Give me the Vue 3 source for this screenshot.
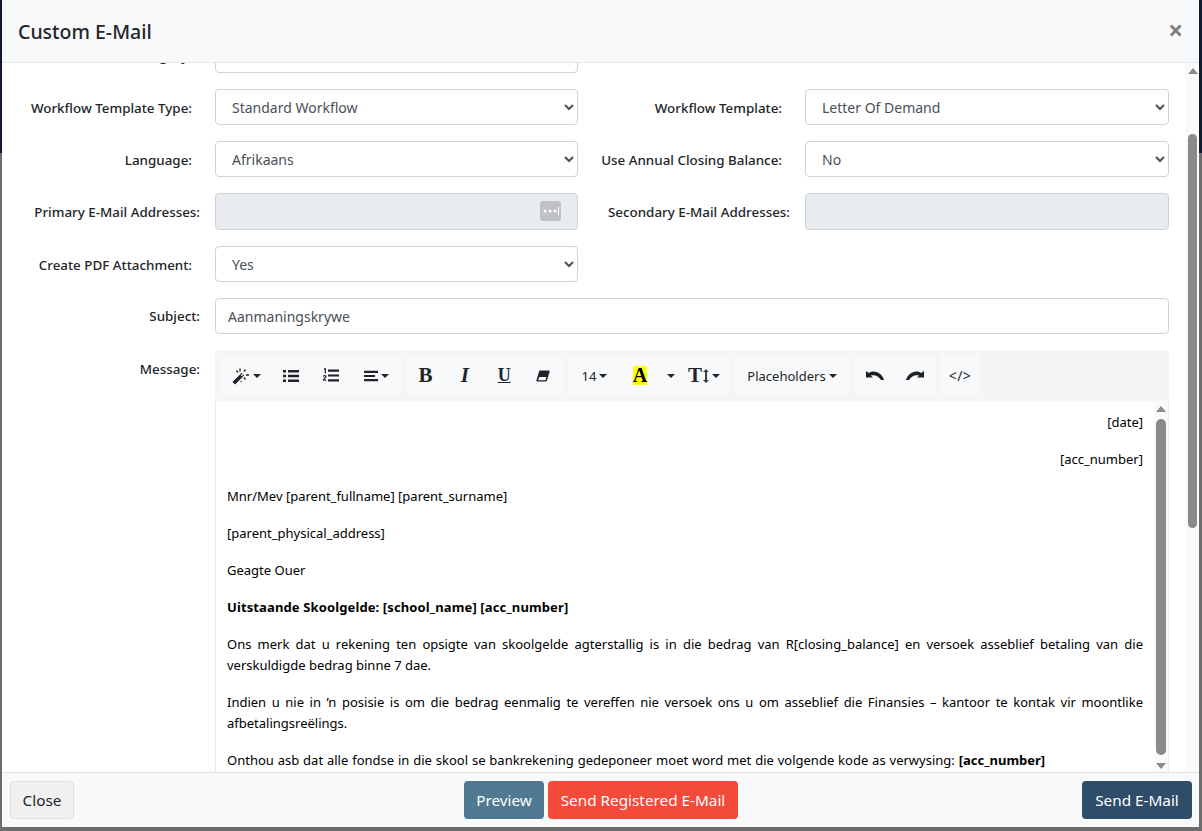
<script setup>
const topRows = [
  { l1: 'Workflow Template Type:', v1: 'Standard Workflow', l2: 'Workflow Template:', v2: 'Letter Of Demand' },
  { l1: 'Language:', v1: 'Afrikaans', l2: 'Use Annual Closing Balance:', v2: 'No' },
];
</script>

<template>
  <div class="page">
    <div class="modal">
      <header class="modal-header">
        <h5>Custom E-Mail</h5>
        <span class="close">×</span>
      </header>

      <div class="modal-body">
        <div class="scroll-content">
          <div class="row clipped">
            <label class="inset">Category:</label>
            <div class="field"></div>
          </div>

          <div v-for="row in topRows" :key="row.l1" class="row">
            <label class="inset">{{ row.l1 }}</label>
            <select class="field select"><option>{{ row.v1 }}</option></select>
            <label class="inset">{{ row.l2 }}</label>
            <select class="field select"><option>{{ row.v2 }}</option></select>
          </div>

          <div class="row">
            <label>Primary E-Mail Addresses:</label>
            <div class="field disabled tall">
              <span class="dots">
                <svg width="21" height="20" viewBox="0 0 21 20">
                  <rect width="21" height="20" rx="3" fill="#bfc1c5" />
                  <circle cx="5" cy="10" r="1.500" fill="#fff" />
                  <circle cx="10" cy="10" r="1.500" fill="#fff" />
                  <circle cx="15" cy="10" r="1.500" fill="#fff" />
                  <rect x="18" y="6" width="1" height="8" fill="#fff" />
                </svg>
              </span>
            </div>
            <label>Secondary E-Mail Addresses:</label>
            <div class="field disabled tall"></div>
          </div>

          <div class="row">
            <label class="inset">Create PDF Attachment:</label>
            <select class="field select"><option>Yes</option></select>
          </div>

          <div class="row wide">
            <label>Subject:</label>
            <input class="field text" value="Aanmaningskrywe" />
          </div>

          <div class="row wide">
            <label class="top">Message:</label>
            <div class="editor">
              <div class="toolbar">
                <div class="group">
                  <button class="tool caret w50">
                    <svg width="18" height="18" viewBox="0 0 18 18">
                      <path d="M1.800 16.200 11 7" stroke="#1f2226" stroke-width="3.600" />
                      <path d="M9.300 8.700 11 7" stroke="#f8f9fa" stroke-width="1.400" />
                      <path d="M8 1.500v3M13.500 2.500l-1.500 2M17 8h-3M4.500 3.500l1.500 2M13.500 12.500l-1.500-2M9 14v1" stroke="#1f2226" stroke-width="1.300" />
                    </svg>
                  </button>
                  <button class="tool w40">
                    <svg width="16" height="14" viewBox="0 0 16 14">
                      <path d="M0 1h3v2.400H0zM5 1h11v2.400H5zM0 5.800h3v2.400H0zM5 5.800h11v2.400H5zM0 10.600h3V13H0zM5 10.600h11V13H5z" fill="#1f2226" />
                    </svg>
                  </button>
                  <button class="tool w40">
                    <svg width="16" height="15" viewBox="0 0 16 15">
                      <path d="M5 1.500h11v2.200H5zM5 6.400h11v2.200H5zM5 11.300h11v2.200H5z" fill="#1f2226" />
                      <path d="M1 1.300 2.300.6v5M.3 8.500c.5-1.200 2.700-1 2.600.3 0 1-2.400 1.900-2.400 3.400h2.700" fill="none" stroke="#1f2226" stroke-width="1.200" />
                    </svg>
                  </button>
                  <button class="tool caret w50">
                    <svg width="14" height="12" viewBox="0 0 14 12">
                      <path d="M0 .8h14v2.200H0zM0 4.900h11v2.200H0zM0 9h14v2.200H0z" fill="#1f2226" />
                    </svg>
                  </button>
                </div>

                <div class="group">
                  <button class="tool glyph">B</button>
                  <button class="tool glyph italic">I</button>
                  <button class="tool glyph under">U</button>
                  <button class="tool">
                    <svg width="14" height="12" viewBox="0 0 14 12">
                      <path d="M4 .5h8.500c1 0 1.300.6 1 1.500l-2.400 8.300c-.3.800-.8 1.200-1.600 1.200H1.500c-1 0-1.300-.6-1-1.500L3 1.700C3.200 1 3.500.5 4 .5z" fill="#1f2226" />
                      <path d="M3.200 7h7.200l-.9 3.200H2.200z" fill="#f8f9fa" />
                    </svg>
                  </button>
                </div>

                <div class="group">
                  <button class="tool caret plain w53">14</button>
                  <button class="tool glyph w38"><span class="hilite">A</span></button>
                  <button class="tool caret w20"></button>
                  <button class="tool glyph caret size w50">T<svg width="6" height="14" viewBox="0 0 6 14"><path d="M3 0 6 3H4v8h2l-3 3-3-3h2V3H0z" fill="#3a3f45" /></svg></button>
                </div>

                <div class="group">
                  <button class="tool caret plain w116">Placeholders</button>
                </div>

                <div class="group">
                  <button class="tool w40">
                    <svg width="18" height="9" viewBox="0 0 18 9">
                      <path d="M0 0v6.500h7L4.800 4.600C8.500 3.500 12.500 4.700 15 9h3C16.500 2.500 8.500-2 3 2z" fill="#1f2226" />
                    </svg>
                  </button>
                  <button class="tool w40">
                    <svg width="18" height="9" viewBox="0 0 18 9">
                      <path d="M18 0v6.500h-7l2.200-1.900C9.500 3.500 5.500 4.700 3 9H0C1.500 2.500 9.500-2 15 2z" fill="#1f2226" />
                    </svg>
                  </button>
                </div>

                <div class="group">
                  <button class="tool plain code w40">&lt;/&gt;</button>
                </div>
              </div>

              <div class="doc">
                <div class="doc-text">
                  <p class="right">[date]</p>
                  <p class="right">[acc_number]</p>
                  <p>Mnr/Mev [parent_fullname] [parent_surname]</p>
                  <p>[parent_physical_address]</p>
                  <p>Geagte Ouer</p>
                  <p class="heading"><b>Uitstaande Skoolgelde: [school_name] [acc_number]</b></p>
                  <p>Ons merk dat u rekening ten opsigte van skoolgelde agterstallig is in die bedrag van R[closing_balance] en versoek asseblief betaling van die verskuldigde bedrag binne 7 dae.</p>
                  <p>Indien u nie in ’n posisie is om die bedrag eenmalig te vereffen nie versoek ons u om asseblief die Finansies – kantoor te kontak vir moontlike afbetalingsreëlings.</p>
                  <p class="spaced">Onthou asb dat alle fondse in die skool se bankrekening gedeponeer moet word met die volgende kode as verwysing: <b>[acc_number]</b></p>
                </div>
                <div class="bar small">
                  <i class="arrow up"></i>
                  <i class="thumb"></i>
                  <i class="arrow down"></i>
                </div>
              </div>
            </div>
          </div>
        </div>

        <div class="bar outer">
          <i class="arrow up"></i>
          <i class="thumb"></i>
        </div>
      </div>

      <footer class="modal-footer">
        <button class="btn btn-close">Close</button>
        <div class="center">
          <button class="btn btn-preview">Preview</button>
          <button class="btn btn-red">Send Registered E-Mail</button>
        </div>
        <button class="btn btn-send">Send E-Mail</button>
      </footer>
    </div>
  </div>
</template>

<style>
html,
body {
  margin: 0;
  height: 100%;
  overflow: hidden;
}
</style>

<style scoped>
.page {
  width: 1202px;
  height: 831px;
  box-sizing: border-box;
  padding: 0 3px 4px 2px;
  background: linear-gradient(#0f1a30 153px, #6d6d6d 153px);
  font-family: 'Noto Sans', sans-serif;
  font-size: 14px;
  color: #212529;
}

.modal {
  height: 100%;
  display: flex;
  flex-direction: column;
  background: #fff;
}

.modal-header {
  height: 61px;
  flex: none;
  display: flex;
  align-items: center;
  justify-content: space-between;
  padding: 1px 16px 0 16px;
  background: #f8f9fa;
  border-bottom: 1px solid #e6e9ec;
}

h5 {
  margin: 0;
  font-size: 19.500px;
  font-weight: 500;
  color: #212529;
}

.close {
  font-size: 26px;
  font-weight: 700;
  line-height: 1;
  color: #808080;
  margin-top: -3px;
}

.modal-body {
  flex: 1;
  min-height: 0;
  display: flex;
  overflow: hidden;
}

.scroll-content {
  flex: 1;
  min-width: 0;
  padding: 0 16px;
  margin-top: -26px;
  display: flex;
  flex-direction: column;
  gap: 16px;
}

.row {
  display: grid;
  grid-template-columns: 197px 363px 227px 364px;
  align-items: center;
  flex: none;
}

.row.wide {
  grid-template-columns: 197px 954px;
  align-items: start;
}

label {
  text-align: right;
  font-weight: 500;
  font-size: 13.400px;
  padding-top: 1px;
  padding-right: 15px;
  white-space: nowrap;
}

.row.wide label {
  padding-top: 0;
  height: 36px;
  line-height: 37px;
}

.row.wide .top {
  line-height: 38px;
}

label.inset {
  padding-right: 23px;
}

.field {
  box-sizing: border-box;
  height: 36px;
  width: 100%;
  border: 1px solid #ced4da;
  border-radius: 4px;
  background: #fff;
  font: inherit;
  color: #495057;
}

.select {
  padding: 0 8px 0 12px;
}

.text {
  padding: 0 12px;
  outline: none;
}

.disabled {
  background: #e9ecef;
}

.tall {
  height: 37px;
  position: relative;
}

.dots {
  position: absolute;
  right: 16px;
  top: 7px;
  display: flex;
}

.editor {
  border-radius: 4px 4px 0 0;
}

.toolbar {
  height: 51px;
  box-sizing: border-box;
  display: flex;
  gap: 5px;
  padding: 6px;
  background: #f5f5f5;
  border-radius: 4px 4px 0 0;
}

.group {
  display: flex;
  background: #f8f9fa;
  border-radius: 4px;
}

.tool {
  display: inline-flex;
  align-items: center;
  justify-content: center;
  flex: none;
  box-sizing: border-box;
  height: 39px;
  width: 39.250px;
  padding: 0;
  border: 0;
  background: none;
  font: inherit;
  color: #212529;
}

.w20 { width: 20px; }
.w38 { width: 38px; }
.w40 { width: 40px; }
.w50 { width: 50px; }
.w53 { width: 53px; }
.w116 { width: 116px; }

.caret::after {
  content: '';
  margin-left: 3px;
  border-top: 4px solid #212529;
  border-left: 4px solid transparent;
  border-right: 4px solid transparent;
}

.glyph {
  font-family: 'Liberation Serif', serif;
  font-size: 21px;
  font-weight: 700;
}

.italic {
  font-style: italic;
}

.under {
  text-decoration: underline;
  font-size: 18px;
}

.hilite {
  background: #ff0;
  color: #000;
  line-height: 19px;
  font-size: 20px;
}

.size svg {
  margin-left: 1px;
}

.plain {
  font-family: 'Noto Sans', sans-serif;
  font-size: 13px;
}

.code {
  font-size: 14px;
  letter-spacing: 0.500px;
}

.doc {
  display: flex;
  height: 371px;
  box-sizing: border-box;
  overflow: hidden;
  background: #fff;
  border-left: 1px solid #e8e8e8;
  border-right: 1px solid #eee;
}

.doc-text {
  flex: 1;
  min-width: 0;
  padding: 11px 11px 0 11px;
  font-size: 13px;
  line-height: 21px;
  color: #000;
}

.doc-text p {
  margin: 0 0 16px;
  text-align: justify;
}

.doc-text p.right {
  text-align: right;
}

.doc-text p.heading {
  letter-spacing: 0.120px;
}

.doc-text p.spaced {
  word-spacing: 0.500px;
}

.bar {
  flex: none;
  width: 14px;
  position: relative;
  background: #fafafa;
}

.thumb {
  position: absolute;
  left: 3px;
  right: 2px;
  border-radius: 5px;
  background: #8a8a8a;
}

.outer .thumb {
  top: 71px;
  height: 394px;
}

.small .thumb {
  top: 18px;
  height: 336px;
  left: 2px;
  right: 2px;
}

.arrow {
  position: absolute;
  left: 3px;
  border-left: 5px solid transparent;
  border-right: 5px solid transparent;
}

.small .arrow {
  left: 2px;
}

.arrow.up {
  top: 5px;
  border-bottom: 6px solid #8a8a8a;
}

.arrow.down {
  bottom: 3px;
  border-top: 6px solid #8a8a8a;
}

.modal-footer {
  height: 55px;
  flex: none;
  box-sizing: border-box;
  position: relative;
  z-index: 1;
  display: flex;
  align-items: center;
  justify-content: space-between;
  padding: 0 7px 0 8px;
  background: #f8f9fa;
  border-top: 1px solid #dee2e6;
}

.center {
  display: flex;
  gap: 4px;
  margin-left: 46px;
}

.btn {
  height: 38px;
  box-sizing: border-box;
  border: 1px solid transparent;
  border-radius: 4px;
  padding: 0;
  font: inherit;
  font-size: 15.300px;
  color: #fff;
}

.btn-close {
  width: 64px;
  background: #f0f0f0;
  border-color: #e0e0e0;
  color: #212529;
}

.btn-preview {
  width: 80px;
  background: #4f7a91;
}

.btn-red {
  width: 190px;
  background: #f44a3a;
}

.btn-send {
  width: 110px;
  background: #2e4d69;
}
</style>
